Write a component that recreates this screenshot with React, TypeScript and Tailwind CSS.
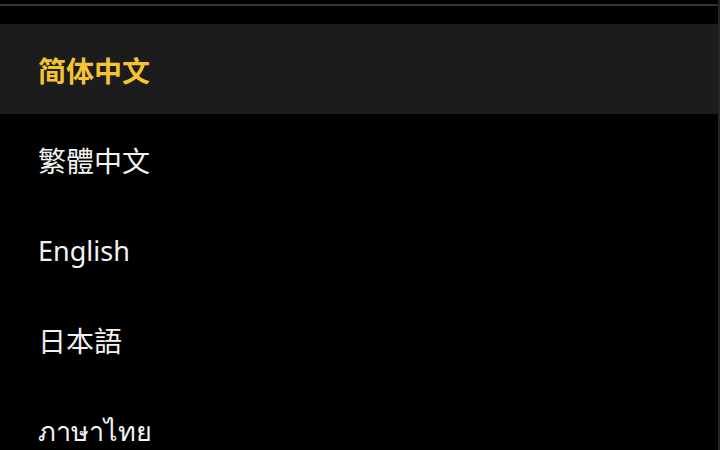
const languages = [
  { label: "简体中文", size: "text-[28px]" },
  { label: "繁體中文", size: "text-[28px]" },
  { label: "English", size: "text-[27px]" },
  { label: "日本語", size: "text-[28px]" },
  { label: "ภาษาไทย", size: "text-[27px]" },
];

export default function App() {
  const selected = 0;
  return (
    <div className="w-[720px] h-[450px] overflow-hidden bg-black flex font-['Noto_Sans','Noto_Sans_CJK_SC',sans-serif]">
      <div className="flex-1 flex flex-col">
        <div className="h-6 pt-1 shrink-0">
          <div className="h-[2px] bg-[#333333]" />
        </div>
        {languages.map((lang, i) => (
          <div
            key={lang.label}
            className={
              i === selected
                ? "h-[90px] shrink-0 flex items-center pt-[3px] px-[38px] bg-[#1c1c1c]"
                : "h-[90px] shrink-0 flex items-center pt-[3px] px-[38px]"
            }
          >
            <span
              className={
                i === selected
                  ? `${lang.size} leading-none font-bold text-[#f5c531]`
                  : `${lang.size} leading-none text-[#f2f2f2]`
              }
            >
              {lang.label}
            </span>
          </div>
        ))}
      </div>
      <div className="w-[2px] bg-[#262626] shrink-0" />
    </div>
  );
}
